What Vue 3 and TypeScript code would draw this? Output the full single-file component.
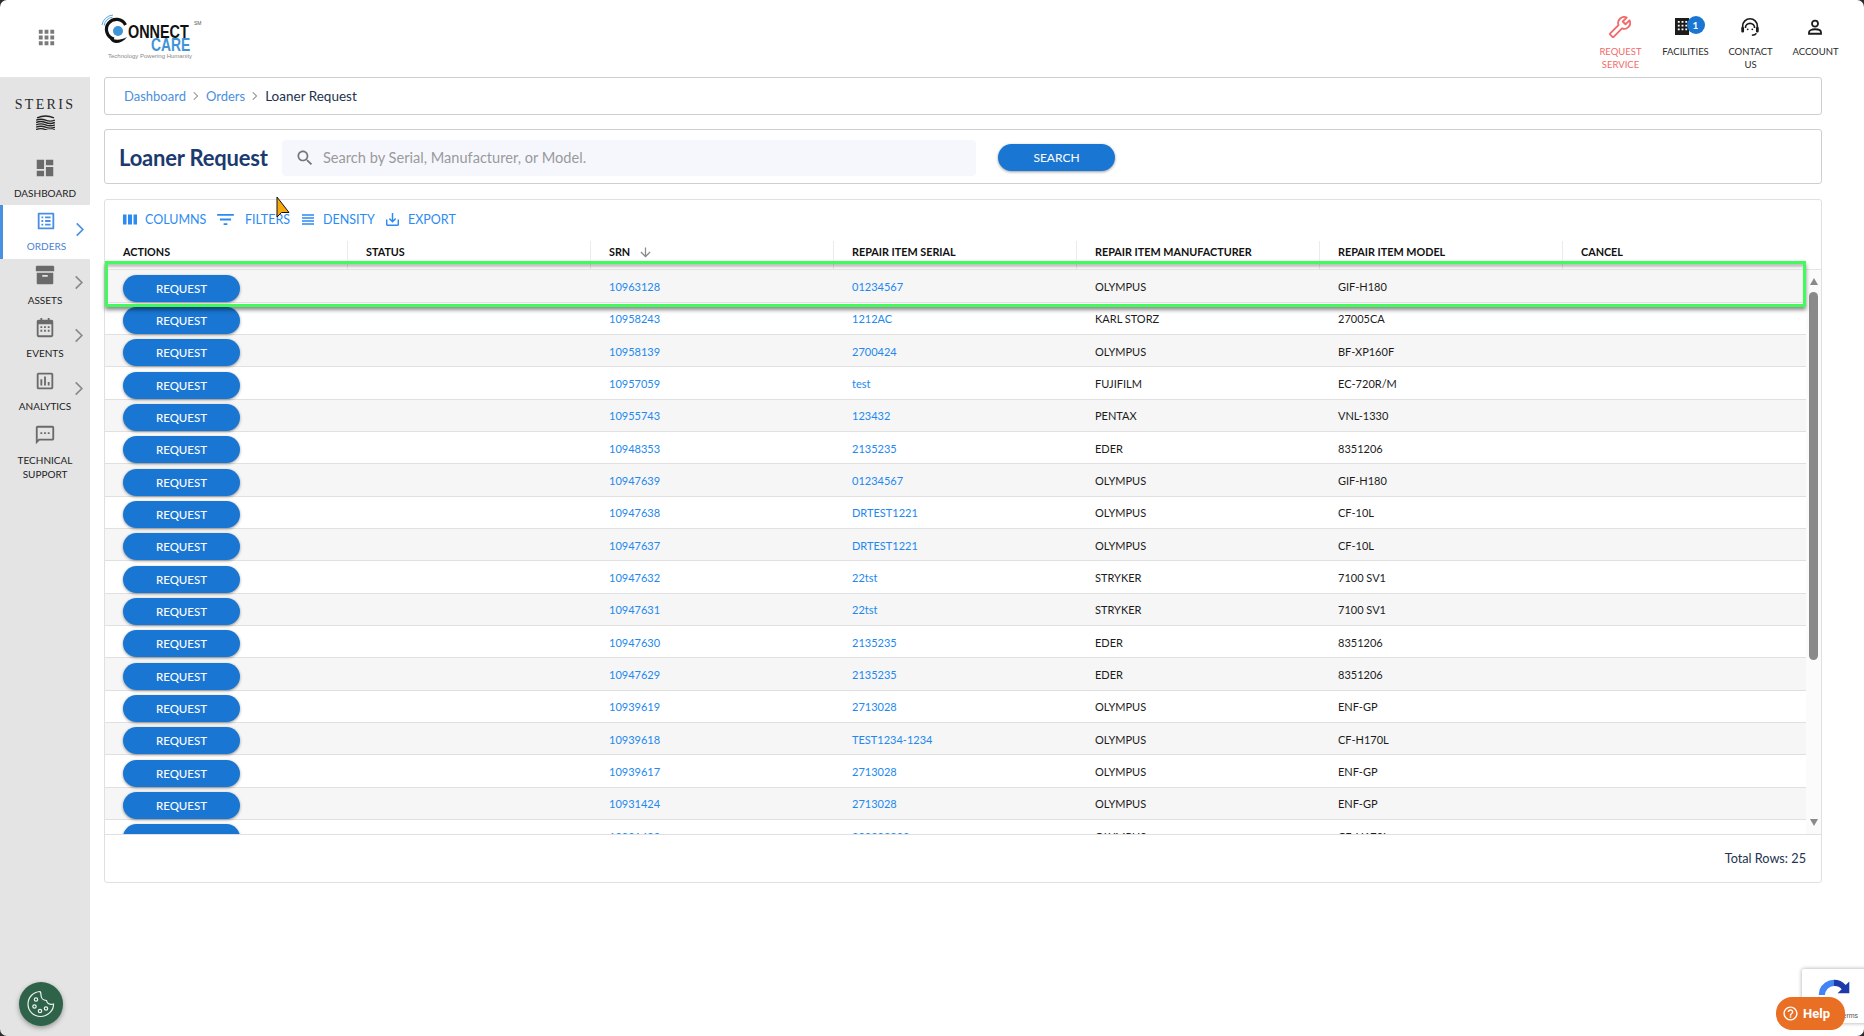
<script setup lang="ts">
interface NavItem { label: string[]; d: string; active?: boolean; chevron?: boolean }
const navItems: NavItem[] = [
  { label: ['DASHBOARD'], d: 'M3 13h8V3H3v10zm0 8h8v-6H3v6zm10 0h8V11h-8v10zm0-18v6h8V3h-8z' },
  { label: ['ORDERS'], active: true, chevron: true, d: 'M19 5v14H5V5h14m1.100-2H3.900c-.5 0-.9.4-.9.9v16.200c0 .4.4.9.9.9h16.200c.4 0 .9-.5.9-.9V3.900c0-.5-.5-.9-.9-.9zM11 7h6v2h-6V7zm0 4h6v2h-6v-2zm0 4h6v2h-6zM7 7h2v2H7zm0 4h2v2H7zm0 4h2v2H7z' },
  { label: ['ASSETS'], chevron: true, d: 'M3.500 2h17c.8 0 1.500.7 1.500 1.500V8H2V3.500C2 2.700 2.700 2 3.500 2zM3 9.500h18V21c0 .6-.4 1-1 1H4c-.6 0-1-.4-1-1V9.500zM9 12v2h6v-2H9z' },
  { label: ['EVENTS'], chevron: true, d: 'M7 1h2v2h6V1h2v2h2c1.100 0 2 .9 2 2v15c0 1.100-.9 2-2 2H5c-1.100 0-2-.9-2-2V5c0-1.100.9-2 2-2h2V1zM5 8v12h14V8H5zm2 2h2v2H7v-2zm4 0h2v2h-2v-2zm4 0h2v2h-2v-2zm-8 4h2v2H7v-2zm4 0h2v2h-2v-2zm4 0h2v2h-2v-2z' },
  { label: ['ANALYTICS'], chevron: true, d: 'M19 3H5c-1.100 0-2 .9-2 2v14c0 1.100.9 2 2 2h14c1.100 0 2-.9 2-2V5c0-1.100-.9-2-2-2zm0 16H5V5h14v14zM7 10h2v7H7zm4-3h2v10h-2zm4 6h2v4h-2z' },
  { label: ['TECHNICAL', 'SUPPORT'], d: 'M20 2H4c-1.100 0-2 .9-2 2v18l4-4h14c1.100 0 2-.9 2-2V4c0-1.100-.9-2-2-2zm0 14H5.170L4 17.170V4h16v12zM7 9h2v2H7zm4 0h2v2h-2zm4 0h2v2h-2z' }
]

const columns = ['ACTIONS', 'STATUS', 'SRN', 'REPAIR ITEM SERIAL', 'REPAIR ITEM MANUFACTURER', 'REPAIR ITEM MODEL', 'CANCEL']

const rows: [string, string, string, string][] = [
  ['10963128', '01234567', 'OLYMPUS', 'GIF-H180'],
  ['10958243', '1212AC', 'KARL STORZ', '27005CA'],
  ['10958139', '2700424', 'OLYMPUS', 'BF-XP160F'],
  ['10957059', 'test', 'FUJIFILM', 'EC-720R/M'],
  ['10955743', '123432', 'PENTAX', 'VNL-1330'],
  ['10948353', '2135235', 'EDER', '8351206'],
  ['10947639', '01234567', 'OLYMPUS', 'GIF-H180'],
  ['10947638', 'DRTEST1221', 'OLYMPUS', 'CF-10L'],
  ['10947637', 'DRTEST1221', 'OLYMPUS', 'CF-10L'],
  ['10947632', '22tst', 'STRYKER', '7100 SV1'],
  ['10947631', '22tst', 'STRYKER', '7100 SV1'],
  ['10947630', '2135235', 'EDER', '8351206'],
  ['10947629', '2135235', 'EDER', '8351206'],
  ['10939619', '2713028', 'OLYMPUS', 'ENF-GP'],
  ['10939618', 'TEST1234-1234', 'OLYMPUS', 'CF-H170L'],
  ['10939617', '2713028', 'OLYMPUS', 'ENF-GP'],
  ['10931424', '2713028', 'OLYMPUS', 'ENF-GP'],
  ['10931423', '202303303', 'OLYMPUS', 'CF-H170L']
]
</script>

<template>
  <div class="page">
    <header class="topbar">
      <div class="apps">
        <svg viewBox="0 0 24 24" width="23" height="23"><path fill="#7a7a7a" d="M4 8h4V4H4v4zm6 12h4v-4h-4v4zm-6 0h4v-4H4v4zm0-6h4v-4H4v4zm6 0h4v-4h-4v4zm6-10v4h4V4h-4zm-6 4h4V4h-4v4zm6 6h4v-4h-4v4zm0 6h4v-4h-4v4z"/></svg>
      </div>
      <div class="logo">
        <div class="logo-top">
          <svg class="logo-mark" viewBox="0 0 30 30" width="30" height="30">
            <g fill="none" stroke="#5aa5dc" stroke-width="1">
              <path d="M1 11 A12 12 0 0 1 12 1"/>
              <path d="M3.200 11.500 A10 10 0 0 1 11.500 3.200"/>
              <path d="M5.500 12 A8 8 0 0 1 12 5.500"/>
            </g>
            <path fill="none" stroke="#111" stroke-width="3.200" d="M24.500 11 A10 10 0 1 0 13 25"/>
            <circle cx="17" cy="17" r="5" fill="#3d94d6"/>
            <path fill="#111" d="M8 23c4 3 11 4 18 0-3 4-7 6-11 6-3 0-6-3-7-6z"/>
          </svg>
          <span class="logo-name">ONNECT</span>
          <span class="logo-sm">SM</span>
        </div>
        <div class="logo-care">CARE</div>
        <div class="logo-tag">Technology Powering Humanity</div>
      </div>
      <nav class="topnav">
        <a class="topitem red">
          <span class="topicon">
            <svg viewBox="0 0 24 24" width="22" height="22"><path fill="none" stroke="#f26a6a" stroke-width="2" stroke-linejoin="round" transform="matrix(-1 0 0 1 24 0)" d="M22.700 19l-9.100-9.100c.9-2.300.4-5-1.500-6.900-2-2-5-2.400-7.400-1.300L9 6 6 9 1.600 4.700C.4 7.100.9 10.100 2.900 12.100c1.900 1.900 4.600 2.400 6.900 1.500l9.100 9.100c.4.4 1 .4 1.400 0l2.300-2.300c.5-.4.500-1.100.1-1.400z"/></svg>
          </span>
          <span>REQUEST</span><span>SERVICE</span>
        </a>
        <a class="topitem">
          <span class="topicon">
            <svg viewBox="0 0 16 18" width="15" height="17" class="building"><path fill="#1c1c1c" fill-rule="evenodd" d="M0 0h15v18H0zM3 3v2h2V3zm4 0v2h2V3zm4 0v2h2V3zM3 7v2h2V7zm4 0v2h2V7zm4 0v2h2V7zM3 11v2h2v-2zm4 0v2h2v-2zm4 0v2h2v-2z"/></svg>
            <span class="badge">1</span>
          </span>
          <span>FACILITIES</span>
        </a>
        <a class="topitem">
          <span class="topicon">
            <svg viewBox="0 0 24 24" width="22" height="22"><g fill="none" stroke="#1c1c1c" stroke-width="1.800"><path d="M4 15V11a8 8 0 0 1 16 0v4"/><path d="M7 13a5 5 0 0 1 10 0"/><path d="M19 19c-1 1.500-3 2-5 2"/></g><rect x="2.500" y="12" width="3" height="6" rx="1.200" fill="#1c1c1c"/><rect x="18.500" y="12" width="3" height="6" rx="1.200" fill="#1c1c1c"/><circle cx="9.500" cy="14.500" r="1" fill="#1c1c1c"/><circle cx="14.500" cy="14.500" r="1" fill="#1c1c1c"/></svg>
          </span>
          <span>CONTACT</span><span>US</span>
        </a>
        <a class="topitem">
          <span class="topicon">
            <svg viewBox="0 0 24 24" width="18" height="18"><g fill="none" stroke="#1c1c1c" stroke-width="2.400"><circle cx="12" cy="7.500" r="4"/><path d="M4 21v-2c0-2 3-4 8-4s8 2 8 4v2z"/></g></svg>
          </span>
          <span>ACCOUNT</span>
        </a>
      </nav>
    </header>

    <div class="body">
      <aside class="sidebar">
        <div class="steris">
          <div class="steris-name">STERIS</div>
          <svg viewBox="0 0 20 16" width="19" height="15"><g fill="none" stroke="#222" stroke-width="1.500"><path d="M1 3q9-4 18 0"/><path d="M0 5.500q5-2 10 0t10 0"/><path d="M0 8q5-2 10 0t10 0"/><path d="M0 10.500q5-2 10 0t10 0"/><path d="M0 13q5-2 10 0t10 0"/><path d="M0 15.500q5-2 10 0t10 0"/></g></svg>
        </div>
        <a v-for="item in navItems" :key="item.label[0]" class="navitem" :class="{ active: item.active }">
          <svg viewBox="0 0 24 24" width="22" height="22" class="navicon"><path :d="item.d" fill-rule="evenodd"/></svg>
          <span v-for="l in item.label" :key="l" class="navlabel">{{ l }}</span>
          <svg v-if="item.chevron" class="chev" viewBox="0 0 10 16" width="10" height="15"><path d="M1.500 1.500 8 8l-6.500 6.500" fill="none" stroke-width="1.800"/></svg>
        </a>
        <button class="cookie" aria-label="Cookie settings">
          <svg viewBox="0 0 32 32" width="32" height="32"><g fill="none" stroke="#eef4ef" stroke-width="1.200"><path d="M15 3.500c-7 .5-12 6-12 12.500 0 7 5.500 12.500 12.500 12.500S29 22.500 28.500 16c-4 1-6.500-.5-7-3.500-3.500 0-5.500-2.500-5.500-5.500 0-1.500-.5-3-1-3.500z"/><circle cx="11" cy="11.500" r="1.700"/><circle cx="9.500" cy="18.500" r="1.700"/><circle cx="15" cy="23" r="1.700"/><circle cx="21" cy="20.500" r="1.700"/></g></svg>
        </button>
      </aside>

      <main class="main">
        <div class="card crumbs">
          <a>Dashboard</a>
          <svg viewBox="0 0 8 12" width="6" height="10"><path d="M1 1l5 5-5 5" fill="none" stroke="#8a8a8a" stroke-width="1.400"/></svg>
          <a>Orders</a>
          <svg viewBox="0 0 8 12" width="6" height="10"><path d="M1 1l5 5-5 5" fill="none" stroke="#8a8a8a" stroke-width="1.400"/></svg>
          <span>Loaner Request</span>
        </div>

        <div class="card searchcard">
          <h1>Loaner Request</h1>
          <div class="searchbox">
            <svg viewBox="0 0 24 24" width="20" height="20"><path fill="#757575" d="M15.500 14h-.79l-.28-.27C15.410 12.590 16 11.110 16 9.500 16 5.910 13.090 3 9.500 3S3 5.910 3 9.500 5.910 16 9.500 16c1.610 0 3.090-.59 4.230-1.570l.27.28v.79l5 4.990L20.490 19l-4.990-5zm-6 0C7.010 14 5 11.990 5 9.500S7.010 5 9.500 5 14 7.010 14 9.500 11.990 14 9.500 14z"/></svg>
            <span>Search by Serial, Manufacturer, or Model.</span>
          </div>
          <button class="pill searchbtn">SEARCH</button>
        </div>

        <div class="card tablecard">
          <div class="toolbar">
            <a class="tool t-columns">
              <svg viewBox="0 0 14 11" width="14" height="11"><path d="M0 .5h3.500v10H0zM5 .5h4v10H5zM10.500 .5H14v10h-3.500z"/></svg>
              COLUMNS
            </a>
            <a class="tool t-filters">
              <svg viewBox="3 5 18 14" width="17" height="13"><path d="M10 18h4v-2h-4v2zM3 6v2h18V6H3zm3 7h12v-2H6v2z"/></svg>
              FILTERS
            </a>
            <a class="tool t-density">
              <svg viewBox="4 5 16 14" width="12" height="11"><path d="M4 15h16v-2H4v2zm0 4h16v-2H4v2zm0-8h16V9H4v2zm0-6v2h16V5H4z"/></svg>
              DENSITY
            </a>
            <a class="tool t-export">
              <svg viewBox="3 3 18 18" width="13" height="13"><path d="M19 12v7H5v-7H3v7c0 1.100.9 2 2 2h14c1.100 0 2-.9 2-2v-7h-2zm-6 .67l2.590-2.580L17 11.500l-5 5-5-5 1.410-1.410L11 12.670V3h2z"/></svg>
              EXPORT
            </a>
          </div>

          <div class="headrow">
            <div v-for="c in columns" :key="c" class="headcell">
              {{ c }}
              <svg v-if="c === 'SRN'" viewBox="0 0 24 24" width="15" height="15"><path fill="#8a8a8a" d="M20 12l-1.410-1.410L13 16.170V4h-2v12.170l-5.580-5.590L4 12l8 8 8-8z"/></svg>
            </div>
          </div>

          <div class="bodywrap">
            <div class="rows">
              <div v-for="(r, i) in rows" :key="r[0]" class="row" :class="{ odd: i % 2 === 0 }">
                <div class="cell btncell"><button class="pill reqbtn">REQUEST</button></div>
                <div class="cell"></div>
                <div class="cell link">{{ r[0] }}</div>
                <div class="cell link">{{ r[1] }}</div>
                <div class="cell">{{ r[2] }}</div>
                <div class="cell">{{ r[3] }}</div>
                <div class="cell"></div>
              </div>
            </div>
            <div class="scroll">
              <span class="arrow up"></span>
              <span class="thumb"></span>
              <span class="arrow down"></span>
            </div>
          </div>

          <div class="tablefoot">Total Rows: 25</div>
          <div class="highlight"></div>
        </div>
      </main>
    </div>

    <svg class="cursor" viewBox="0 0 14 26" width="14" height="26"><path d="M1 1v20l4.500-4.500H13z" fill="#f5a90f" stroke="#111" stroke-width="1"/></svg>

    <div class="recaptcha">
      <svg viewBox="0 0 40 40" width="36" height="36">
        <path d="M20 3a17 17 0 0 1 13 6l4-4v13H24l4.500-4.500A10 10 0 0 0 20 10z" fill="#1c3aa9"/>
        <path d="M20 3A17 17 0 0 0 4 14l-1 6h7a10 10 0 0 1 10-10z" fill="#4285f4"/>
        <path d="M3 20c0 5 2 9 5 12l-4 4V23z" fill="#ababab"/>
      </svg>
      <span class="terms">Privacy - Terms</span>
    </div>
    <button class="help">
      <svg viewBox="0 0 24 24" width="17" height="17"><path fill="#fff" d="M11 18h2v-2h-2v2zm1-16C6.480 2 2 6.480 2 12s4.480 10 10 10 10-4.480 10-10S17.520 2 12 2zm0 18c-4.410 0-8-3.590-8-8s3.590-8 8-8 8 3.590 8 8-3.590 8-8 8zm0-14c-2.210 0-4 1.790-4 4h2c0-1.100.9-2 2-2s2 .9 2 2c0 2-3 1.750-3 5h2c0-2.250 3-2.500 3-5 0-2.210-1.790-4-4-4z"/></svg>
      Help
    </button>

    <div class="frame"><div class="frame-inner"></div></div>
  </div>
</template>

<style>
html, body { margin: 0; padding: 0; background: #fff; overflow: hidden; }
</style>

<style scoped>
.page {
  position: relative;
  width: 1864px;
  height: 1036px;
  overflow: hidden;
  background: #fff;
  font-family: Lato, "Open Sans", sans-serif;
  color: #1c1c1c;
  display: flex;
  flex-direction: column;
}
.topbar { height: 77px; flex: none; display: flex; align-items: flex-start; }
.apps { width: 90px; height: 74px; flex: none; display: flex; align-items: center; justify-content: center; padding-left: 2px; box-sizing: border-box; }
.logo { margin: 14px 0 0 11px; width: 102px; display: flex; flex-direction: column; }
.logo-top { display: flex; align-items: flex-start; height: 25px; position: relative; }
.logo-mark { flex: none; margin-right: -3px; }
.logo-name { font: 700 18px/14px "Liberation Sans", sans-serif; color: #111; margin-top: 11px; transform: scaleX(.8); transform-origin: left center; white-space: nowrap; }
.logo-sm { position: absolute; left: 93px; top: 6px; font: 400 5px/6px "Liberation Sans", sans-serif; color: #555; }
.logo-care { font: 700 18px/14px "Liberation Sans", sans-serif; color: #3f94d8; margin: -1px 0 0 50px; transform: scaleX(.77); transform-origin: left center; }
.logo-tag { font: 400 6px/7px "Liberation Sans", sans-serif; color: #888; margin: 1px 0 0 7px; white-space: nowrap; }

.topnav { margin-left: auto; display: flex; padding-right: 16px; padding-top: 15px; }
.topitem { width: 65px; display: flex; flex-direction: column; align-items: center; font-size: 9.500px; line-height: 13px; color: #2a2a2a; }
.topitem.red { color: #f26a6a; }
.topicon { height: 23px; margin: 0 0 7px -2px; display: flex; align-items: center; justify-content: center; position: relative; }
.building { margin-right: 4px; }
.badge { position: absolute; left: 50%; top: 1px; margin-left: 2px; width: 18px; height: 18px; border-radius: 50%; background: #1976d2; color: #fff; font-size: 10px; font-weight: 700; line-height: 18px; text-align: center; }

.body { flex: 1; display: flex; min-height: 0; }
.sidebar { width: 90px; flex: none; background: #e4e4e4; position: relative; }
.steris { height: 75px; display: flex; flex-direction: column; align-items: center; padding-top: 20px; box-sizing: border-box; }
.steris-name { font: 400 14px/16px "Liberation Serif", serif; letter-spacing: 2.300px; color: #2a2a2a; margin-bottom: 2px; }
.navitem { position: relative; height: 53.330px; display: flex; flex-direction: column; align-items: center; padding-top: 5px; box-sizing: border-box; color: #1c1c1c; }
.navicon { fill: #6a6a6a; flex: none; margin-bottom: 7px; }
.navlabel { font-size: 10px; line-height: 14px; }
.navitem.active { background: #fff; border-left: 3px solid #4a90e2; color: #4a7fd6; }
.navitem.active .navicon { fill: #4a90e2; margin-left: -2px; }
.chev { position: absolute; right: 6px; top: 16px; stroke: #8a8a8a; }
.navitem.active .chev { stroke: #4a90e2; top: 17px; right: 5px; }
.cookie { position: absolute; left: 19px; bottom: 10px; width: 44px; height: 44px; padding: 0; border: 0; border-radius: 50%; background: #2e6349; display: flex; align-items: center; justify-content: center; box-shadow: 0 2px 5px rgba(0,0,0,.35); }

.main { flex: 1; min-width: 0; padding: 0 42px 0 14px; display: flex; flex-direction: column; }
.card { background: #fff; border: 1px solid #cfcfcf; border-radius: 3px; box-sizing: border-box; }
.crumbs { height: 38px; flex: none; display: flex; align-items: center; padding: 0 0 1px 19px; font-size: 13.500px; color: #22324f; gap: 7px; }
.crumbs a { color: #4a8fe0; font-size: 13px; }
.searchcard { height: 55px; flex: none; margin-top: 14px; display: flex; align-items: center; padding: 2px 0 0 14px; }
.searchcard h1 { margin: 0; width: 163px; flex: none; font-size: 22px; font-weight: 700; color: #1b3a6e; letter-spacing: -.2px; white-space: nowrap; }
.searchbox { width: 694px; height: 36px; flex: none; background: #f6f7fd; border-radius: 4px; display: flex; align-items: center; padding-left: 13px; box-sizing: border-box; gap: 8px; font-size: 14.600px; color: #9a9a9a; }
.pill { border: 0; background: #1976d2; color: #fff; font-family: Lato, sans-serif; border-radius: 14px; padding: 0; box-shadow: 0 1px 3px rgba(0,0,0,.4); }
.searchbtn { width: 117px; height: 27px; margin-left: 22px; font-size: 12px; }
.tablecard { height: 684px; flex: none; margin-top: 15px; border-color: #e0e0e0; display: flex; flex-direction: column; position: relative; }
.toolbar { height: 41px; flex: none; display: flex; align-items: center; padding: 0 0 3px 18px; box-sizing: border-box; }
.tool { display: flex; align-items: center; font-size: 12.500px; color: #2b8bf2; }
.tool svg { fill: #2b8bf2; flex: none; }
.t-columns { width: 94px; gap: 8px; }
.t-filters { width: 85px; gap: 11px; }
.t-density { width: 84px; gap: 9px; }
.t-export { gap: 9px; }
.headrow { height: 29.370px; flex: none; display: grid; grid-template-columns: repeat(7, 243px); border-bottom: 1px solid #e4e4e4; box-sizing: border-box; }
.headcell { display: flex; align-items: flex-start; gap: 8px; padding: 3px 0 0 18px; box-sizing: border-box; font-size: 10.800px; line-height: 16px; font-weight: 700; color: #111; border-right: 1px solid #ebebeb; white-space: nowrap; }
.headcell:last-child { border-right: 0; }
.headcell svg { margin-top: 1px; }
.bodywrap { height: 563.300px; flex: none; display: flex; overflow: hidden; }
.rows { width: 1701px; flex: none; }
.row { height: 32.330px; display: grid; grid-template-columns: repeat(7, 243px); border-bottom: 1px solid #e0e0e0; box-sizing: border-box; font-size: 11px; }
.row.odd { background: #f6f6f6; }
.cell { display: flex; align-items: center; padding: 1px 0 0 18px; color: #1c1c1c; white-space: nowrap; box-sizing: border-box; }
.link { color: #2288f0; }
.btncell { align-items: flex-end; }
.reqbtn { width: 117px; height: 27px; font-size: 11.500px; font-weight: 500; }
.scroll { flex: 1; background: #fbfbfb; position: relative; display: flex; flex-direction: column; align-items: center; }
.arrow { width: 0; height: 0; border-left: 4.500px solid transparent; border-right: 4.500px solid transparent; flex: none; }
.arrow.up { border-bottom: 7px solid #8a8a8a; margin-top: 8px; }
.thumb { width: 9px; height: 368px; border-radius: 5px; background: #8a8a8a; margin-top: 7px; flex: none; }
.arrow.down { border-top: 7px solid #8a8a8a; margin-top: auto; margin-bottom: 8px; }
.tablefoot { flex: 1; border-top: 1px solid #e0e0e0; display: flex; align-items: center; justify-content: flex-end; padding-right: 15px; font-size: 12.700px; color: #22324f; box-sizing: border-box; }
.highlight { position: absolute; left: 0; top: 61px; width: 1701px; height: 46px; box-sizing: border-box; border: 3px solid #42fa5c; box-shadow: 0 3px 4px rgba(0,0,0,.45), inset 0 5px 3px -2px rgba(0,0,0,.25); pointer-events: none; }

.cursor { position: absolute; left: 276px; top: 196px; }
.recaptcha { position: absolute; left: 1802px; top: 969px; width: 70px; height: 54px; background: #fff; box-shadow: 0 0 4px rgba(0,0,0,.35); border-radius: 2px; padding: 8px 0 0 14px; box-sizing: border-box; }
.terms { position: absolute; left: 8px; top: 42px; font: 400 7px/9px "Liberation Sans", sans-serif; color: #555; white-space: nowrap; }
.help { position: absolute; left: 1776px; top: 997px; width: 69px; height: 33px; border: 0; border-radius: 16px 16px 14px 16px; background: #e96f25; color: #fff; font: 700 13px Roboto, sans-serif; display: flex; align-items: center; gap: 4px; padding: 0 0 0 6px; }
.frame { position: absolute; inset: 0; overflow: hidden; pointer-events: none; }
.frame-inner { position: absolute; inset: 0; border-radius: 7px; box-shadow: 0 0 0 12px #2b2b2b; }
</style>
